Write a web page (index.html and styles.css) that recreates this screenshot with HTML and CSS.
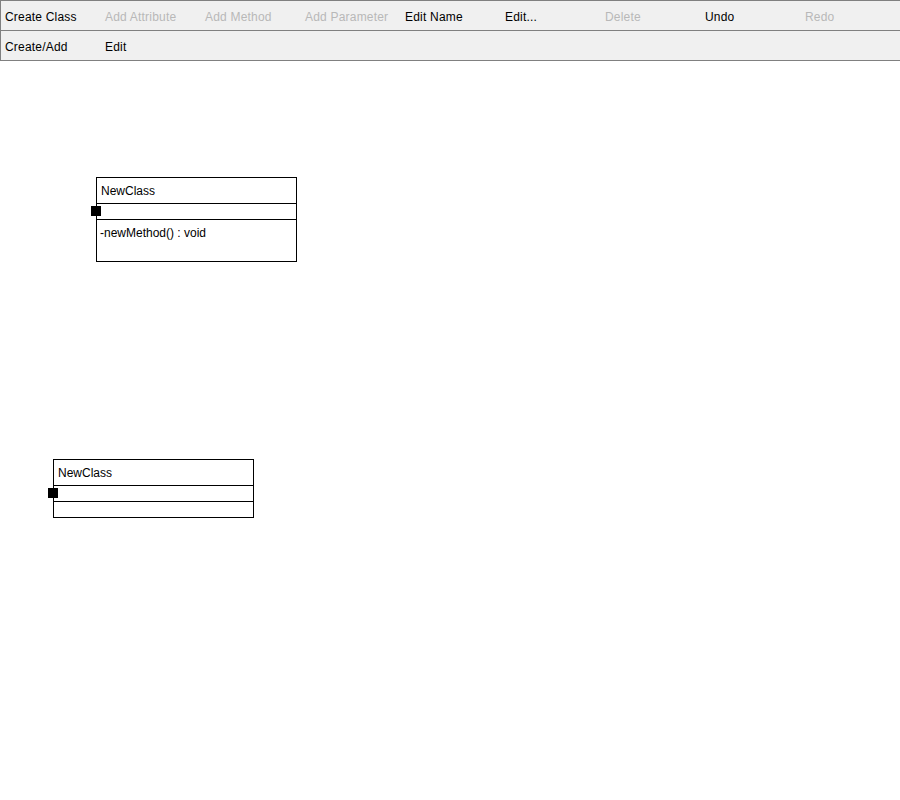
FILE: index.html
```html
<!DOCTYPE html>
<html>
<head>
<meta charset="utf-8">
<link rel="stylesheet" href="styles.css">
</head>
<body>
<div class="toolbar">
  <div class="row">
    <span class="item">Create Class</span>
    <span class="item disabled">Add Attribute</span>
    <span class="item disabled">Add Method</span>
    <span class="item disabled">Add Parameter</span>
    <span class="item">Edit Name</span>
    <span class="item">Edit...</span>
    <span class="item disabled">Delete</span>
    <span class="item">Undo</span>
    <span class="item disabled">Redo</span>
  </div>
  <div class="row">
    <span class="item">Create/Add</span>
    <span class="item">Edit</span>
  </div>
</div>
<div class="canvas">
  <div class="uml-class box-a">
    <div class="name">NewClass</div>
    <div class="attrs"></div>
    <div class="methods tall">
      <div class="member">-newMethod() : void</div>
    </div>
    <span class="handle"></span>
  </div>
  <div class="uml-class box-b">
    <div class="name">NewClass</div>
    <div class="attrs"></div>
    <div class="methods"></div>
    <span class="handle"></span>
  </div>
</div>
</body>
</html>
```
FILE: styles.css
```css
html, body {
  margin: 0;
  padding: 0;
  background: #ffffff;
  font-family: "Liberation Sans", Arial, sans-serif;
  font-size: 12px;
  color: #000000;
}

.toolbar {
  background: #f0f0f0;
  border-top: 1px solid #808080;
  border-left: 1px solid #808080;
  border-bottom: 1px solid #808080;
}

.row {
  display: grid;
  grid-template-columns: repeat(9, 100px);
  height: 29px;
  box-sizing: border-box;
  padding-top: 9px;
  line-height: 14px;
}

.row + .row {
  border-top: 1px solid #808080;
  height: 30px;
}

.item {
  padding-left: 4px;
  white-space: nowrap;
  letter-spacing: 0.2px;
}

.item.disabled {
  color: #b8b8b8;
}

.canvas {
  position: relative;
  height: 739px;
}

.uml-class {
  position: absolute;
  width: 201px;
  box-sizing: border-box;
  border: 1px solid #000000;
  background: #ffffff;
  line-height: 14px;
}

.box-a {
  left: 96px;
  top: 116px;
}

.box-b {
  left: 53px;
  top: 398px;
}

.name {
  height: 26px;
  box-sizing: border-box;
  padding: 6px 0 0 4px;
  border-bottom: 1px solid #000000;
}

.attrs {
  height: 16px;
  box-sizing: border-box;
  border-bottom: 1px solid #000000;
}

.methods {
  height: 15px;
}

.methods.tall {
  height: 41px;
  box-sizing: border-box;
  padding: 6px 0 0 3px;
}

.handle {
  position: absolute;
  left: -6px;
  top: 28px;
  width: 10px;
  height: 10px;
  background: #000000;
}
```
